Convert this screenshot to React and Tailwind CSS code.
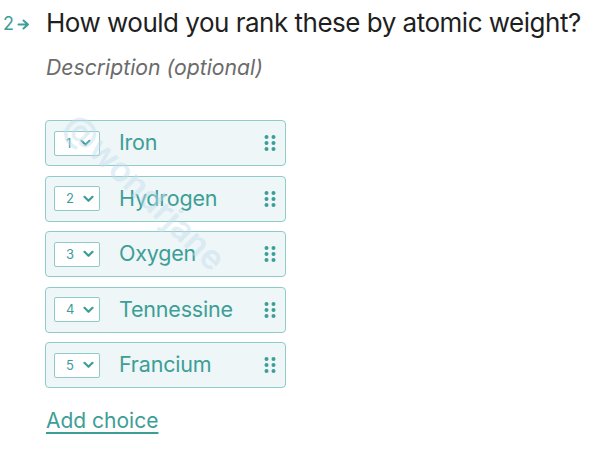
import React from "react";

const items = ["Iron", "Hydrogen", "Oxygen", "Tennessine", "Francium"];

function Dots() {
  return (
    <svg width="12" height="16" viewBox="0 0 12 16" className="text-[#3d9e97]">
      {[2, 8, 14].map((y) =>
        [2.5, 9.5].map((x) => <circle key={`${x}-${y}`} cx={x} cy={y} r="2" fill="currentColor" />)
      )}
    </svg>
  );
}

function Chevron() {
  return (
    <svg width="11" height="8" viewBox="0 0 11 8" fill="none">
      <path d="M1.5 1.8 L5.5 5.8 L9.5 1.8" stroke="#3d9e97" strokeWidth="2.2" strokeLinecap="round" strokeLinejoin="round" />
    </svg>
  );
}

export default function App() {
  return (
    <div className="relative w-[600px] h-[463px] bg-white overflow-hidden" style={{ fontFamily: "Inter, 'Liberation Sans', sans-serif" }}>
      <div className="flex items-start">
        <div className="w-[45px] pl-[3px] pt-[15px] flex items-center gap-[3px] text-[#3d9e97] text-[18px] leading-none">
          <span>2</span>
          <svg width="13" height="11" viewBox="0 0 13 11" fill="none">
            <path d="M1.5 5.5 H11 M6.5 1.5 L11 5.5 L6.5 9.5" stroke="#3d9e97" strokeWidth="2" strokeLinecap="round" strokeLinejoin="round" />
          </svg>
        </div>
        <div className="flex flex-col">
          <h1 className="pt-[6px] pl-[1px] whitespace-nowrap text-[26px] leading-[34px] text-[#1f1f1f] tracking-[-0.5px]">How would you rank these by atomic weight?</h1>
          <p className="mt-[14px] pl-[1px] whitespace-nowrap text-[21.2px] leading-[26px] italic text-[#6b6b6b]">Description (optional)</p>
          <div className="mt-[40px] flex flex-col gap-[9.5px]">
            {items.map((name, i) => (
              <div key={name} className="w-[241px] h-[46px] rounded-[4px] border border-[#8fcbc8] bg-[#eef6f7] flex items-center pl-[8px] pr-[9px]">
                <div className="w-[46px] h-[25px] rounded-[2px] border border-[#8fcbc8] bg-white flex items-center pl-[11px] gap-[9px]">
                  <span className="text-[13px] leading-none text-[#3d9e97]">{i + 1}</span>
                  <Chevron />
                </div>
                <span className="ml-[19px] flex-1 whitespace-nowrap text-[21.5px] tracking-[-0.2px] leading-none text-[#3d9e97]">{name}</span>
                <Dots />
              </div>
            ))}
          </div>
          <a className="mt-[18px] pl-[1px] whitespace-nowrap text-[21px] leading-[30px] text-[#3d9e97] underline underline-offset-[4px] decoration-[1.5px] w-fit">Add choice</a>
        </div>
      </div>
      <div className="absolute left-[145px] top-[192px] -translate-x-1/2 -translate-y-1/2 rotate-[44deg] whitespace-nowrap text-[34px] leading-none font-semibold text-[#c3dcee] opacity-45 pointer-events-none">@wondrjane</div>
    </div>
  );
}
